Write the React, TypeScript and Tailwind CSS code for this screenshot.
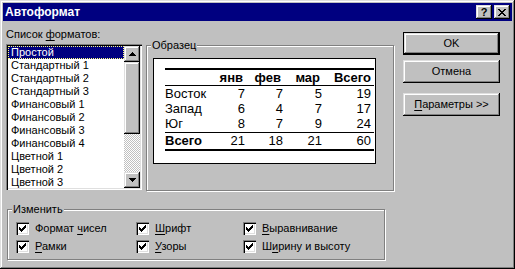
import React from 'react';

const raised =
  'bg-[#c0c0c0] shadow-[inset_-1px_-1px_0_#000,inset_1px_1px_0_#dfdfdf,inset_-2px_-2px_0_#808080,inset_2px_2px_0_#fff]';
const sunken =
  'shadow-[inset_1px_1px_0_#808080,inset_2px_2px_0_#000,inset_-1px_-1px_0_#fff,inset_-2px_-2px_0_#dfdfdf]';
const etched = 'border border-[#808080] shadow-[inset_1px_1px_0_#fff,1px_1px_0_#fff]';

const formats = [
  'Простой',
  'Стандартный 1',
  'Стандартный 2',
  'Стандартный 3',
  'Финансовый 1',
  'Финансовый 2',
  'Финансовый 3',
  'Финансовый 4',
  'Цветной 1',
  'Цветной 2',
  'Цветной 3',
];

const rows = [
  ['Восток', '7', '7', '5', '19'],
  ['Запад', '6', '4', '7', '17'],
  ['Юг', '8', '7', '9', '24'],
];

function Arrow({ up }: { up?: boolean }) {
  return (
    <svg width="7" height="4" viewBox="0 0 7 4" shapeRendering="crispEdges">
      {up ? <path d="M3 0h1v1h1v1h1v1h1v1H0V3h1V2h1V1h1z" fill="#000" /> : <path d="M0 0h7v1H6v1H5v1H4v1H3V3H2V2H1V1H0z" fill="#000" />}
    </svg>
  );
}

function Check() {
  return (
    <svg width="7" height="7" viewBox="0 0 7 7" shapeRendering="crispEdges">
      <path d="M6 0h1v3H6v1H5v1H4v1H3v1H2V6H1V5H0V2h1v1h1v1h1V3h1V2h1V1h1z" fill="#000" />
    </svg>
  );
}

function CheckBox({ before, key_, after }: { before: string; key_: string; after: string }) {
  return (
    <div className="flex h-[13px] items-center">
      <div className={`flex h-[13px] w-[13px] items-center justify-center bg-white ${sunken}`}>
        <Check />
      </div>
      <span className="ml-[6px] text-[11px] leading-[13px]">
        {before}
        <span className="underline underline-offset-2">{key_}</span>
        {after}
      </span>
    </div>
  );
}

export default function App() {
  return (
    <div
      className={`flex h-[269px] w-[515px] flex-col bg-[#c0c0c0] p-[3px] font-['Liberation_Sans',Arial,sans-serif] text-black shadow-[inset_-1px_-1px_0_#000,inset_1px_1px_0_#dfdfdf,inset_-2px_-2px_0_#808080,inset_2px_2px_0_#fff]`}
    >
      {/* title bar */}
      <div className="flex h-[18px] shrink-0 items-center justify-between bg-[#000080] pl-[2px] pr-[2px]">
        <span className="text-[12px] font-bold leading-[18px] text-white">Автоформат</span>
        <div className="flex gap-[2px]">
          <div className={`flex h-[14px] w-[16px] items-center justify-center text-[11px] font-bold leading-none ${raised}`}>?</div>
          <div className={`flex h-[14px] w-[16px] items-center justify-center ${raised}`}>
            <svg width="8" height="7" viewBox="0 0 8 7" shapeRendering="crispEdges">
              <path d="M0 0h2v1h1v1h2V1h1V0h2v1H7v1H6v1H5v1h1v1h1v1h1v1H6V6H5V5H3v1H2v1H0V6h1V5h1V4h1V3H2V2H1V1H0z" fill="#000" />
            </svg>
          </div>
        </div>
      </div>

      <div className="flex items-start">
        {/* list of formats */}
        <div className="ml-[3px] flex flex-col">
          <div className="mt-[7px] h-[13px] text-[11px] leading-[13px]">
            Список <span className="underline underline-offset-2">ф</span>орматов:
          </div>
          <div className={`mt-[3px] flex h-[146px] w-[136px] bg-white p-[2px] ${sunken}`}>
            <div className="flex-1 overflow-hidden">
              {formats.map((f, i) => (
                <div
                  key={f}
                  className={
                    i === 0
                      ? 'h-[13px] border border-dotted border-[#ffff80] bg-[#000080] pl-[2px] text-[11px] leading-[11px] text-white'
                      : 'h-[13px] pl-[3px] text-[11px] leading-[13px]'
                  }
                >
                  {f}
                </div>
              ))}
            </div>
            <div className="flex w-[16px] flex-col">
              <div className={`flex h-[16px] items-center justify-center ${raised}`}>
                <Arrow up />
              </div>
              <div className={`h-[72px] ${raised}`} />
              <div className="flex-1 bg-[repeating-conic-gradient(#fff_0_25%,#c0c0c0_0_50%)] bg-[length:2px_2px]" />
              <div className={`flex h-[16px] items-center justify-center ${raised}`}>
                <Arrow />
              </div>
            </div>
          </div>
        </div>

        {/* sample */}
        <div className={`relative ml-[4px] mt-[24px] h-[146px] w-[248px] ${etched}`}>
          <span className="absolute -top-[7px] left-[4px] bg-[#c0c0c0] px-[1px] text-[11px] leading-[13px]">Образец</span>
          <div className="ml-[6px] mt-[12px] h-[106px] w-[223px] border border-black bg-white pl-[11px] pr-[1px] pt-[9px]">
            <div className="border-y-2 border-black text-[13px]">
              <div className="grid h-[16px] grid-cols-[40px_40px_38px_39px_1fr] border-b border-black font-bold leading-[16px]">
                <span />
                <span className="pr-[2px] text-right">янв</span>
                <span className="pr-[2px] text-right">фев</span>
                <span className="pr-[2px] text-right">мар</span>
                <span className="pr-[3px] text-right">Всего</span>
              </div>
              <div className="border-b border-black pb-[1px]">
                {rows.map((r) => (
                  <div key={r[0]} className="grid h-[15px] grid-cols-[40px_40px_38px_39px_1fr] leading-[15px]">
                    <span>{r[0]}</span>
                    <span className="text-right">{r[1]}</span>
                    <span className="text-right">{r[2]}</span>
                    <span className="text-right">{r[3]}</span>
                    <span className="pr-[3px] text-right">{r[4]}</span>
                  </div>
                ))}
              </div>
              <div className="grid h-[16px] grid-cols-[40px_40px_38px_39px_1fr] leading-[16px]">
                <span className="font-bold">Всего</span>
                <span className="text-right">21</span>
                <span className="text-right">18</span>
                <span className="text-right">21</span>
                <span className="pr-[3px] text-right">60</span>
              </div>
            </div>
          </div>
        </div>

        {/* buttons */}
        <div className="ml-[9px] mt-[11px] flex w-[97px] flex-col">
          <div className="h-[23px] border border-black">
            <div className={`flex h-full items-center justify-center text-[11px] ${raised}`}>OK</div>
          </div>
          <div className={`mt-[5px] flex h-[23px] items-center justify-center text-[11px] ${raised}`}>Отмена</div>
          <div className={`mt-[10px] flex h-[23px] items-center justify-center text-[11px] ${raised}`}>
            <span>
              <span className="underline underline-offset-2">П</span>араметры &gt;&gt;
            </span>
          </div>
        </div>
      </div>

      {/* change group */}
      <div className={`relative ml-[4px] mt-[18px] h-[51px] w-[378px] ${etched}`}>
        <span className="absolute -top-[7px] left-[4px] bg-[#c0c0c0] px-[1px] text-[11px] leading-[13px]">Изменить</span>
        <div className="ml-[8px] mt-[12px] grid grid-cols-[120px_107px_1fr] gap-y-[5px]">
          <CheckBox before="Формат " key_="ч" after="исел" />
          <CheckBox before="" key_="Ш" after="рифт" />
          <CheckBox before="" key_="В" after="ыравнивание" />
          <CheckBox before="" key_="Р" after="амки" />
          <CheckBox before="" key_="У" after="зоры" />
          <CheckBox before="Ш" key_="и" after="рину и высоту" />
        </div>
      </div>
    </div>
  );
}
